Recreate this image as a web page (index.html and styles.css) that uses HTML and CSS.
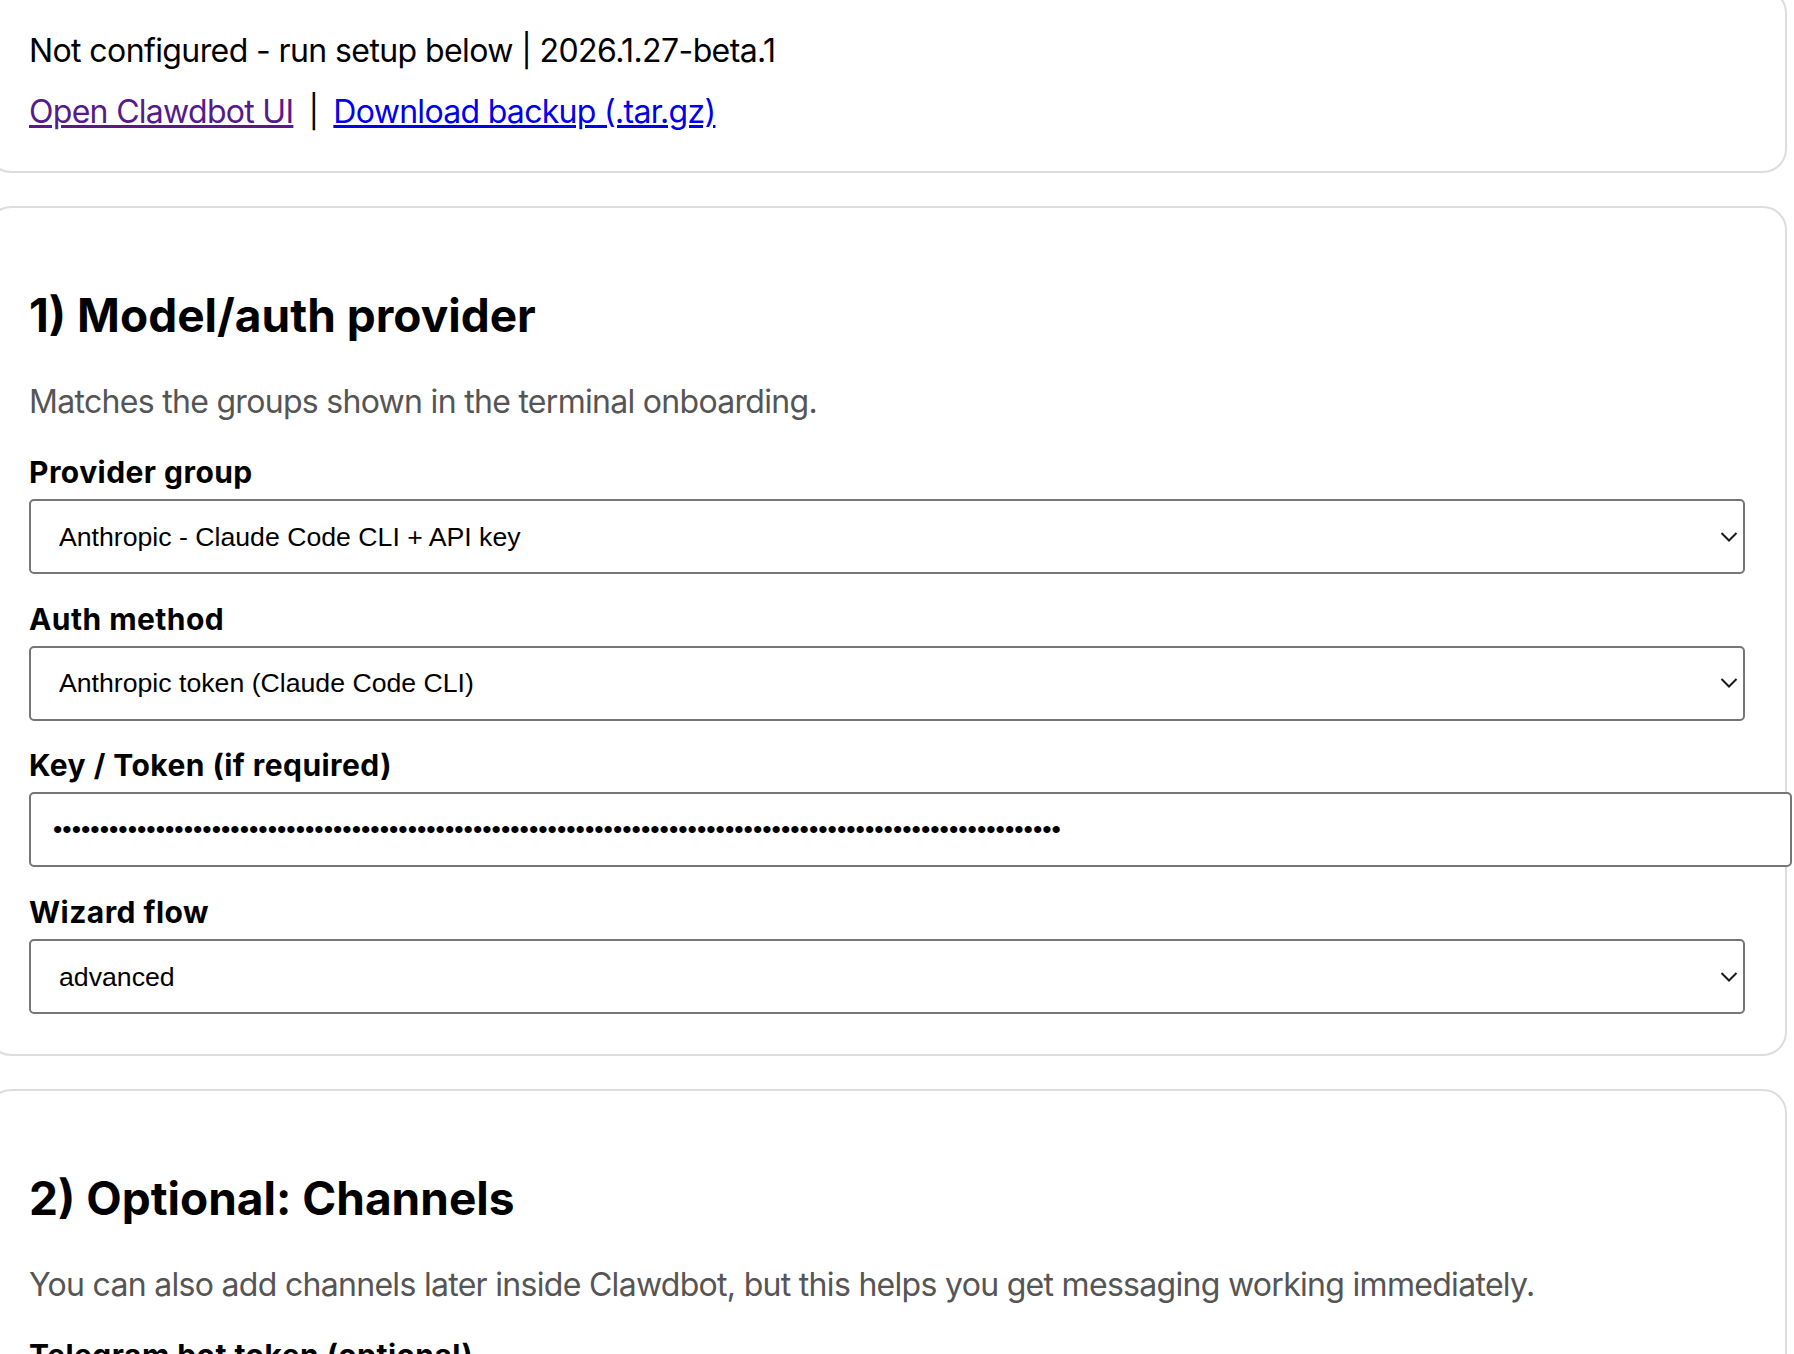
FILE: index.html
```html
<!DOCTYPE html>
<html lang="en">
<head>
<meta charset="utf-8">
<title>Clawdbot Setup</title>
<link rel="stylesheet" href="styles.css">
</head>
<body>
<main class="page">
  <section class="card card-status">
    <p class="status">Not configured - run setup below | 2026.1.27-beta.1</p>
    <p class="links"><a class="visited" href="#">Open Clawdbot UI</a><span class="sep">|</span><a href="#">Download backup (.tar.gz)</a></p>
  </section>

  <section class="card">
    <h2>1) Model/auth provider</h2>
    <p class="muted">Matches the groups shown in the terminal onboarding.</p>

    <div class="field">
      <label class="label" for="authGroup">Provider group</label>
      <div class="select-wrap">
        <select id="authGroup" class="select"><option>Anthropic - Claude Code CLI + API key</option></select>
        <svg class="chev" width="18" height="11" viewBox="0 0 18 11" aria-hidden="true"><path d="M1.5 1.5 L9 9 L16.5 1.5"/></svg>
      </div>
    </div>

    <div class="field">
      <label class="label" for="authChoice">Auth method</label>
      <div class="select-wrap">
        <select id="authChoice" class="select"><option>Anthropic token (Claude Code CLI)</option></select>
        <svg class="chev" width="18" height="11" viewBox="0 0 18 11" aria-hidden="true"><path d="M1.5 1.5 L9 9 L16.5 1.5"/></svg>
      </div>
    </div>

    <div class="field">
      <label class="label" for="authSecret">Key / Token (if required)</label>
      <input id="authSecret" class="input" type="password" value="sk-ant-oat01-Xq7mV2pL9cR4tY8wZ1nB6hJ3kF5dS0aG2eU7iO4pQ9rT1yW6uE3oI8pA5sD2fG7hJ4kL9zX1cV6bN3mQ8wE5rT2y4uI7oPa">
    </div>

    <div class="field">
      <label class="label" for="flow">Wizard flow</label>
      <div class="select-wrap">
        <select id="flow" class="select"><option>advanced</option></select>
        <svg class="chev" width="18" height="11" viewBox="0 0 18 11" aria-hidden="true"><path d="M1.5 1.5 L9 9 L16.5 1.5"/></svg>
      </div>
    </div>
  </section>

  <section class="card">
    <h2>2) Optional: Channels</h2>
    <p class="muted">You can also add channels later inside Clawdbot, but this helps you get messaging working immediately.</p>

    <div class="field">
      <label class="label" for="telegramToken">Telegram bot token (optional)</label>
      <input id="telegramToken" class="input" type="password" placeholder="123456:ABC...">
    </div>
  </section>
</main>
</body>
</html>
```

FILE: styles.css
```css
html,
body {
  margin: 0;
  padding: 0;
  background: #ffffff;
  overflow: hidden;
}

body {
  font-family: Inter, "Noto Sans", "Liberation Sans", sans-serif;
  font-size: 32px;
  letter-spacing: -0.7px;
  color: #000000;
}

.page {
  width: 1800px;
  margin-left: -13px;
}

.card {
  border: 2px solid #dddddd;
  border-radius: 24px;
  padding: 40px;
  margin-bottom: 33px;
  background: #ffffff;
}

.card-status {
  margin-top: -11px;
}

.status {
  margin: 0 0 22px;
  letter-spacing: -0.6px;
}

.links {
  margin: 0;
}

.links a {
  color: #0000ee;
}

.links a.visited {
  color: #551a8b;
}

.sep {
  margin: 0 15px;
}

h2 {
  font-size: 46px;
  font-weight: 700;
  letter-spacing: 0;
  margin: 39px 0 0;
}

.muted {
  color: #555555;
  margin: 39px 0 34px;
}

.field {
  margin-bottom: 27.7px;
}

.field:last-child {
  margin-bottom: 0;
}

.label {
  display: block;
  font-size: 30px;
  line-height: 34px;
  font-weight: 700;
  letter-spacing: 0.45px;
  margin: 0 0 10px;
}

.select-wrap {
  position: relative;
}

.select {
  display: block;
  width: 100%;
  height: 75px;
  box-sizing: border-box;
  border: 2px solid #767676;
  border-radius: 5px;
  padding: 0 40px 0 28px;
  font-family: "Liberation Sans", Arial, sans-serif;
  font-size: 26.67px;
  letter-spacing: 0;
  color: #000000;
  background: #ffffff;
  -webkit-appearance: none;
  appearance: none;
  outline: none;
}

.chev {
  position: absolute;
  right: 7px;
  top: 50%;
  transform: translateY(-50%);
  pointer-events: none;
}

.chev path {
  fill: none;
  stroke: #1a1a1a;
  stroke-width: 2;
}

.input {
  display: block;
  width: 100%;
  height: 71px;
  box-sizing: content-box;
  border: 2px solid #767676;
  border-radius: 5px;
  padding: 0 21px 0 22px;
  font-family: "Liberation Sans", Arial, sans-serif;
  font-size: 26.67px;
  letter-spacing: 0;
  color: #000000;
  background: #ffffff;
  outline: none;
  margin: 0;
}
```
